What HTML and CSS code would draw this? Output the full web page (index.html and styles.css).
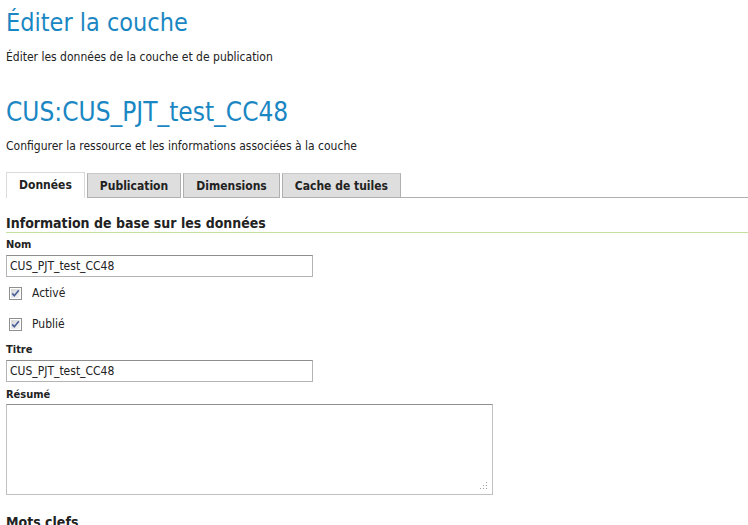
FILE: index.html
```html
<!DOCTYPE html>
<html lang="fr">
<head>
<meta charset="utf-8">
<title>Éditer la couche</title>
<link rel="stylesheet" href="styles.css">
</head>
<body>
<div class="page">
  <h1 class="title">Éditer la couche</h1>
  <p class="desc">Éditer les données de la couche et de publication</p>
  <h1 class="title title-layer">CUS:CUS_PJT_test_CC48</h1>
  <p class="desc">Configurer la ressource et les informations associées à la couche</p>

  <div class="tabs">
    <div class="tab tab-active">Données</div>
    <div class="tab">Publication</div>
    <div class="tab">Dimensions</div>
    <div class="tab">Cache de tuiles</div>
    <div class="tab-rest"></div>
  </div>

  <h3 class="section">Information de base sur les données</h3>

  <div class="field field-nom">
    <label class="lbl">Nom</label>
    <input class="txt" type="text" value="CUS_PJT_test_CC48">
  </div>
  <div class="check">
    <svg class="cb" width="13" height="13" viewBox="0 0 13 13"><defs><linearGradient id="g1" x1="0" y1="0" x2="1" y2="1"><stop offset="0" stop-color="#d6d6d6"/><stop offset="1" stop-color="#f7f7f7"/></linearGradient></defs><rect x="0.5" y="0.5" width="12" height="12" fill="#fff" stroke="#8e8f8f"/><rect x="2" y="2" width="9" height="9" fill="url(#g1)"/><path d="M3.2 6.4 L5.3 8.8 L9.8 3.3" fill="none" stroke="#4a5f97" stroke-width="1.6"/></svg>
    <span>Activé</span>
  </div>
  <div class="check">
    <svg class="cb" width="13" height="13" viewBox="0 0 13 13"><rect x="0.5" y="0.5" width="12" height="12" fill="#fff" stroke="#8e8f8f"/><rect x="2" y="2" width="9" height="9" fill="url(#g1)"/><path d="M3.2 6.4 L5.3 8.8 L9.8 3.3" fill="none" stroke="#4a5f97" stroke-width="1.6"/></svg>
    <span>Publié</span>
  </div>
  <div class="field field-titre">
    <label class="lbl">Titre</label>
    <input class="txt" type="text" value="CUS_PJT_test_CC48">
  </div>
  <div class="field field-resume">
    <label class="lbl">Résumé</label>
    <div class="area-wrap">
      <textarea class="area"></textarea>
      <svg class="grip" width="8" height="8" viewBox="0 0 8 8"><g fill="#a0a0a0"><rect x="6" y="0" width="1" height="1"/><rect x="3" y="3" width="1" height="1"/><rect x="6" y="3" width="1" height="1"/><rect x="0" y="6" width="1" height="1"/><rect x="3" y="6" width="1" height="1"/><rect x="6" y="6" width="1" height="1"/></g></svg>
    </div>
  </div>

  <h3 class="section section-kw">Mots clefs</h3>
</div>
</body>
</html>
```

FILE: styles.css
```css
html, body {
  margin: 0;
  padding: 0;
  background: #fff;
}
body {
  font-family: "DejaVu Sans Condensed", "DejaVu Sans", sans-serif;
  font-stretch: condensed;
  color: #222;
  font-size: 11px;
}
.page {
  padding: 0 0 0 6px;
}
.title {
  margin: 0;
  padding-top: 7px;
  font-size: 25px;
  font-weight: normal;
  color: #1a87c3;
  line-height: 32px;
}
.title-layer {
  padding-top: 31px;
  font-size: 26px;
}
.desc {
  margin: 11px 0 0;
  font-size: 12px;
  line-height: 15px;
  color: #222;
}
.tabs {
  display: flex;
  margin-top: 18px;
  align-items: flex-end;
}
.tab {
  height: 23px;
  line-height: 24px;
  padding: 0 12px;
  margin-right: 2px;
  border: 1px solid #b0b0b0;
  border-top-color: #c8c8c8;
  background: #dedede;
  font-weight: bold;
  font-size: 12px;
  color: #222;
}
.tab-active {
  background: #fff;
  border-color: #dadada;
  border-bottom: none;
  height: 25px;
}
.tab-rest {
  flex: 1;
  border-bottom: 1px solid #b0b0b0;
  margin-left: -2px;
}
.section {
  margin: 17px 0 0;
  padding-bottom: 1px;
  border-bottom: 1px solid #c5df9f;
  font-size: 14px;
  line-height: 16px;
  font-weight: bold;
  color: #222;
}
.field {
  display: flex;
  flex-direction: column;
  align-items: flex-start;
}
.lbl {
  font-weight: bold;
  font-size: 11px;
  line-height: 13px;
  margin-top: 7px;
  margin-bottom: 4px;
}
.field-nom .lbl {
  margin-top: 5px;
}
.txt {
  box-sizing: border-box;
  width: 307px;
  height: 22px;
  margin: 0;
  padding: 1px 3px;
  border: 1px solid #b4b4b4;
  border-top-color: #8e8e8e;
  font-family: inherit;
  font-size: 12px;
  color: #222;
}
.check {
  display: flex;
  align-items: center;
  height: 18px;
  margin-top: 7px;
}
.check + .check {
  margin-top: 13px;
}
.cb {
  margin: 0 10px 0 3px;
  flex: none;
}
.check span {
  font-size: 12px;
}
.field-titre .lbl {
  margin-top: 10px;
}
.field-resume .lbl {
  margin-top: 6px;
  margin-bottom: 3px;
}
.area-wrap {
  position: relative;
  width: 487px;
  height: 91px;
}
.area {
  box-sizing: border-box;
  display: block;
  width: 487px;
  height: 91px;
  margin: 0;
  border: 1px solid #c0c0c0;
  border-top-color: #8e8e8e;
  resize: none;
}
.grip {
  position: absolute;
  right: 5px;
  bottom: 5px;
}
.section-kw {
  border: none;
  margin-top: 19px;
}
```
